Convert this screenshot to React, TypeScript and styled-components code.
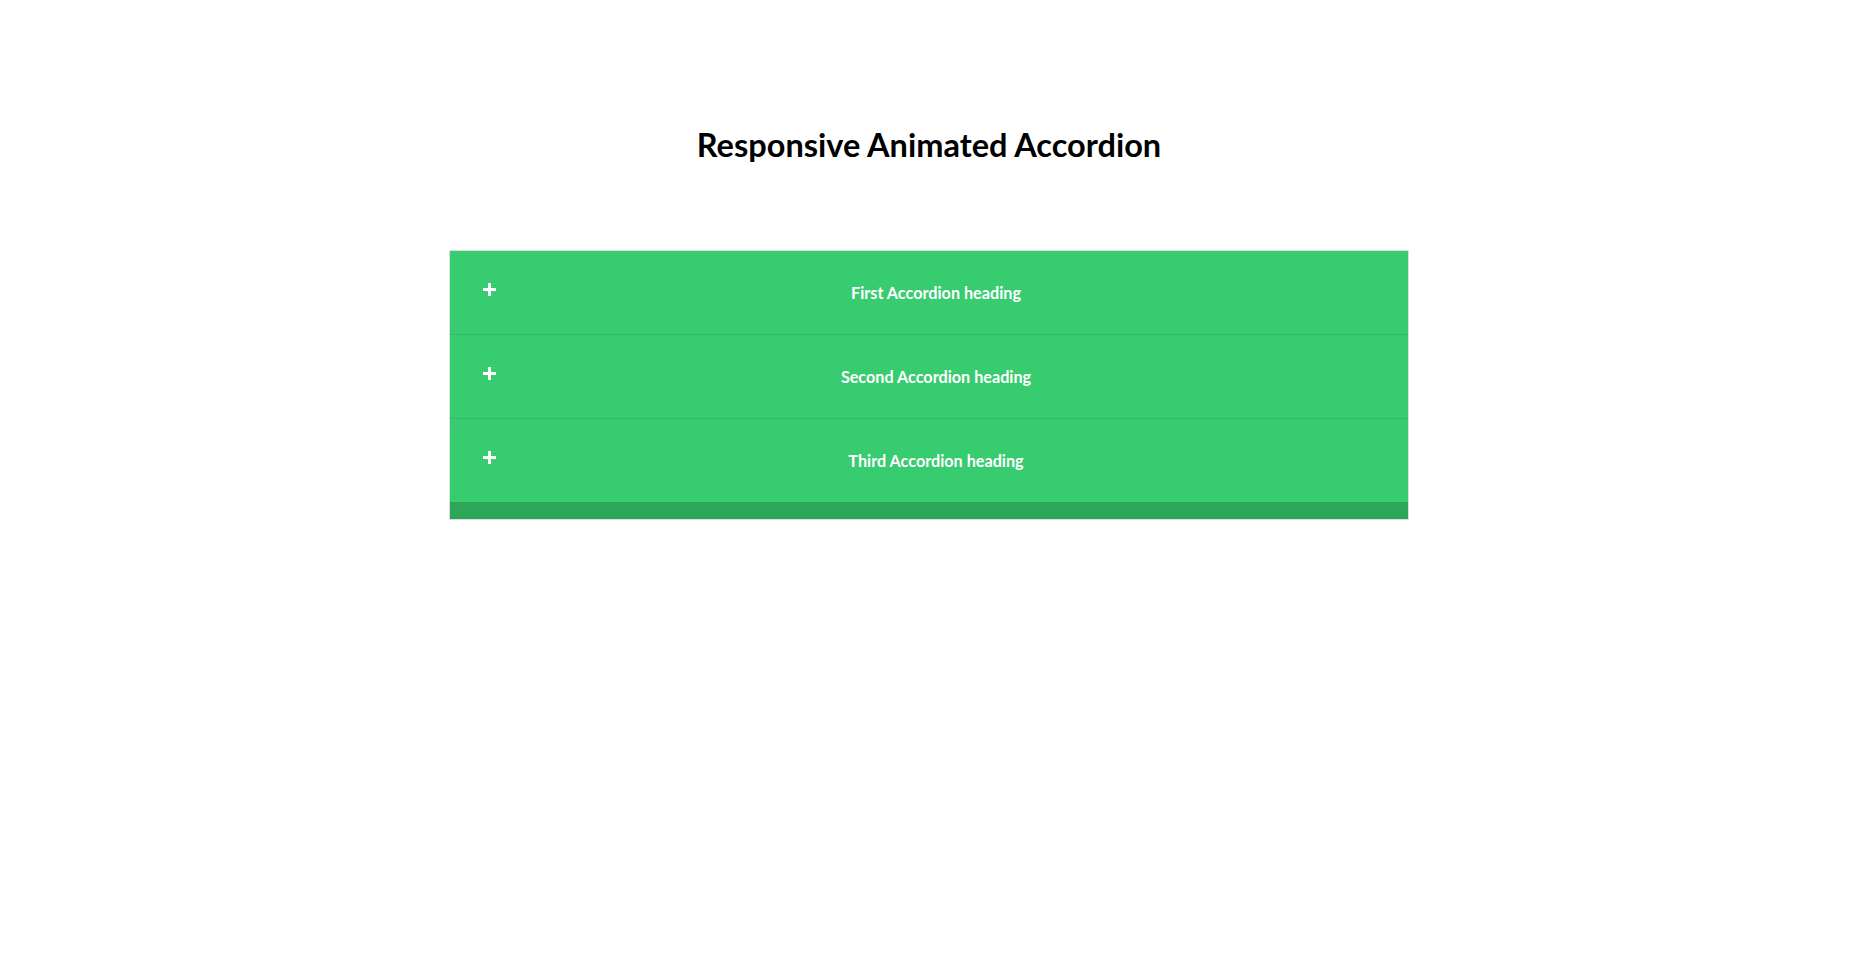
import React from "react";
import styled, { createGlobalStyle } from "styled-components";

const GlobalStyle = createGlobalStyle`
  html, body {
    margin: 0;
    padding: 0;
    background: #ffffff;
  }
  body {
    font-family: Lato, "Open Sans", Arial, sans-serif;
  }
`;

const Page = styled.main`
  display: flex;
  flex-direction: column;
  align-items: center;
  padding-top: 125px;
`;

const Title = styled.h1`
  margin: 0 0 86px;
  font-family: Lato, sans-serif;
  font-weight: 700;
  font-size: 32.5px;
  line-height: 39px;
  color: #000000;
`;

const Accordion = styled.section`
  box-sizing: border-box;
  width: 960px;
  border: 1px solid #dddddd;
  background: #2da659;
  padding-bottom: 17px;
  display: flex;
  flex-direction: column;
`;

const Row = styled.div<{ $last?: boolean }>`
  box-sizing: border-box;
  height: ${(p) => (p.$last ? 83 : 84)}px;
  background: #38cc70;
  border-bottom: ${(p) => (p.$last ? "none" : "1px solid #31bb64")};
  display: flex;
  align-items: center;
  padding: 0 32px 0 33px;
  cursor: pointer;
`;

const PlusIcon = styled.svg`
  flex: none;
  width: 13px;
  height: 13px;
  margin-bottom: 7px;
`;

const Heading = styled.h3`
  flex: 1;
  margin: 0;
  text-align: center;
  font-family: Lato, sans-serif;
  font-weight: 700;
  font-size: 16.2px;
  line-height: 1.2;
  color: #ffffff;
`;

const Plus = () => (
  <PlusIcon viewBox="0 0 13 13" aria-hidden="true">
    <rect x="5" y="0" width="3" height="13" fill="#ffffff" />
    <rect x="0" y="5" width="13" height="3" fill="#ffffff" />
  </PlusIcon>
);

const items = [
  "First Accordion heading",
  "Second Accordion heading",
  "Third Accordion heading",
];

export default function App() {
  return (
    <>
      <GlobalStyle />
      <Page>
        <Title>Responsive Animated Accordion</Title>
        <Accordion>
          {items.map((label, i) => (
            <Row key={label} $last={i === items.length - 1}>
              <Plus />
              <Heading>{label}</Heading>
            </Row>
          ))}
        </Accordion>
      </Page>
    </>
  );
}
